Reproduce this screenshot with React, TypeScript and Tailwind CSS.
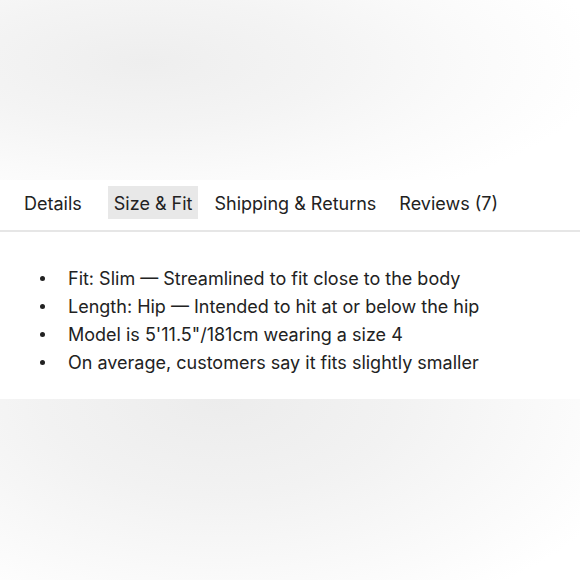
import React from "react";

const tabs = [
  { label: "Details", gap: "ml-0" },
  { label: "Size & Fit", gap: "ml-[20px]" },
  { label: "Shipping & Returns", gap: "ml-[10px]" },
  { label: "Reviews (7)", gap: "ml-[11px]" },
];

const fitNotes = [
  "Fit: Slim — Streamlined to fit close to the body",
  "Length: Hip — Intended to hit at or below the hip",
  "Model is 5'11.5\"/181cm wearing a size 4",
  "On average, customers say it fits slightly smaller",
];

const App = () => {
  return (
    <div
      className="w-[580px] h-[580px] flex flex-col bg-white text-[#222222] overflow-hidden"
      style={{ fontFamily: "Inter, 'Noto Sans', sans-serif" }}
    >
      <div className="h-[180px] bg-[radial-gradient(ellipse_460px_160px_at_145px_62px,#eeeeee_0%,#f4f4f4_40%,#fafafa_70%,#ffffff_100%)]" />
      <div className="bg-white">
        <div className="flex items-center pt-[6px] pl-[18px]">
          {tabs.map((tab) => (
            <div
              key={tab.label}
              className={
                tab.label === "Size & Fit"
                  ? `${tab.gap} h-[33px] px-[6px] pt-[2px] flex items-center text-[18px] bg-[#e8e8e8]`
                  : `${tab.gap} h-[33px] px-[6px] pt-[2px] flex items-center text-[18px]`
              }
            >
              {tab.label}
            </div>
          ))}
        </div>
        <div className="mt-[11px] h-[1.5px] bg-[#e6e6e6]" />
        <ul className="pt-[33px] pb-[22px] pl-[40px]">
          {fitNotes.map((note) => (
            <li key={note} className="flex items-center h-[28px] text-[18px]">
              <span className="w-[5px] h-[5px] rounded-full bg-[#222222] mr-[23px]" />
              {note}
            </li>
          ))}
        </ul>
      </div>
      <div className="flex-1 bg-[radial-gradient(ellipse_440px_240px_at_220px_0px,#ececec_0%,#f2f2f2_40%,#f9f9f9_72%,#ffffff_100%)]" />
    </div>
  );
};

export default App;
